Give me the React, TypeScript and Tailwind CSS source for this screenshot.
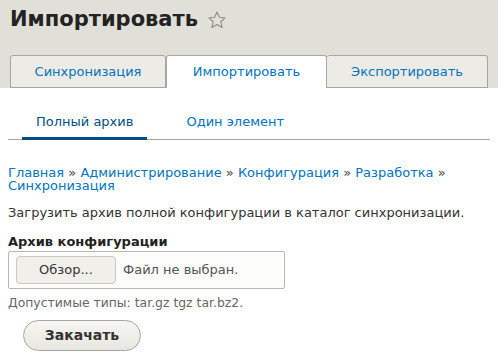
import React from 'react';

const crumbs = ['Главная', 'Администрирование', 'Конфигурация', 'Разработка', 'Синхронизация'];

const App: React.FC = () => {
  return (
    <div className="min-h-screen w-full bg-white text-[13px] text-[#333] font-['DejaVu_Sans',sans-serif]">
      {/* Header with title and primary tabs */}
      <header className="bg-[#e0e0d8] pt-[4px]">
        <h1 className="flex items-center gap-[9px] px-[10px] text-[21px] leading-[30px] font-bold text-[#232323]">
          Импортировать
          <svg width="20" height="20" viewBox="0 0 24 24" className="mt-[1px]">
            <path
              d="M12 2.5l2.9 6.3 6.8.7-5.1 4.6 1.5 6.8L12 17.4l-6.1 3.5 1.5-6.8-5.1-4.6 6.8-.7z"
              fill="none"
              stroke="#8a8a85"
              strokeWidth="1.3"
              strokeLinejoin="round"
            />
          </svg>
        </h1>
        <nav className="flex pl-[10px] mt-[21px]">
          <a className="w-[156px] h-[33px] flex items-center justify-center bg-[#ecebe6] border border-[#a6a7a2] rounded-t-[3px] text-[#0074bd]">
            Синхронизация
          </a>
          <a className="w-[161px] h-[33px] flex items-center justify-center bg-white border border-b-0 border-[#a6a7a2] rounded-t-[3px] text-[#0074bd]">
            Импортировать
          </a>
          <a className="w-[161px] h-[33px] flex items-center justify-center bg-[#ecebe6] border border-l-0 border-[#a6a7a2] rounded-t-[3px] text-[#0074bd]">
            Экспортировать
          </a>
        </nav>
      </header>

      <main className="px-[8px]">
        {/* Secondary tabs */}
        <div className="mt-[24px] flex border-b border-[#a6a7a2]">
          <a className="ml-[14px] px-[14px] pb-[5px] border-b-[3px] border-[#004f80] text-[#004f80] -mb-[1px]">
            Полный архив
          </a>
          <a className="ml-[25px] px-[14px] pb-[5px] text-[#0074bd]">Один элемент</a>
        </div>

        {/* Breadcrumb */}
        <nav className="mt-[26px] leading-[13.5px] text-[#0074bd]">
          {crumbs.map((c, i) => (
            <React.Fragment key={c}>
              <a>{c}</a>
              {i < crumbs.length - 1 && <span className="text-[#444]"> » </span>}
            </React.Fragment>
          ))}
        </nav>

        <p className="mt-[10px]">Загрузить архив полной конфигурации в каталог синхронизации.</p>

        {/* File field */}
        <label className="block mt-[12px] leading-[15px] font-bold text-[#222]">Архив конфигурации</label>
        <div className="mt-[2px] w-[277px] h-[38px] flex items-center gap-[7px] px-[7px] bg-[#fcfcfa] border border-[#b8b8b3] rounded-[2px]">
          <button className="w-[100px] h-[28px] rounded-[4px] bg-[#f0efea] border border-[#c8c8c2] text-[#333]">
            Обзор...
          </button>
          <span className="text-[#555]">Файл не выбран.</span>
        </div>
        <div className="mt-[5px] text-[12.4px] text-[#666]">Допустимые типы: tar.gz tgz tar.bz2.</div>

        <button className="mt-[7px] ml-[15px] w-[118px] h-[31px] rounded-full bg-gradient-to-b from-[#f6f5f1] to-[#e8e7e1] border border-[#a6a7a2] font-bold text-[14px] text-[#333]">
          Закачать
        </button>
      </main>
    </div>
  );
};

export default App;
